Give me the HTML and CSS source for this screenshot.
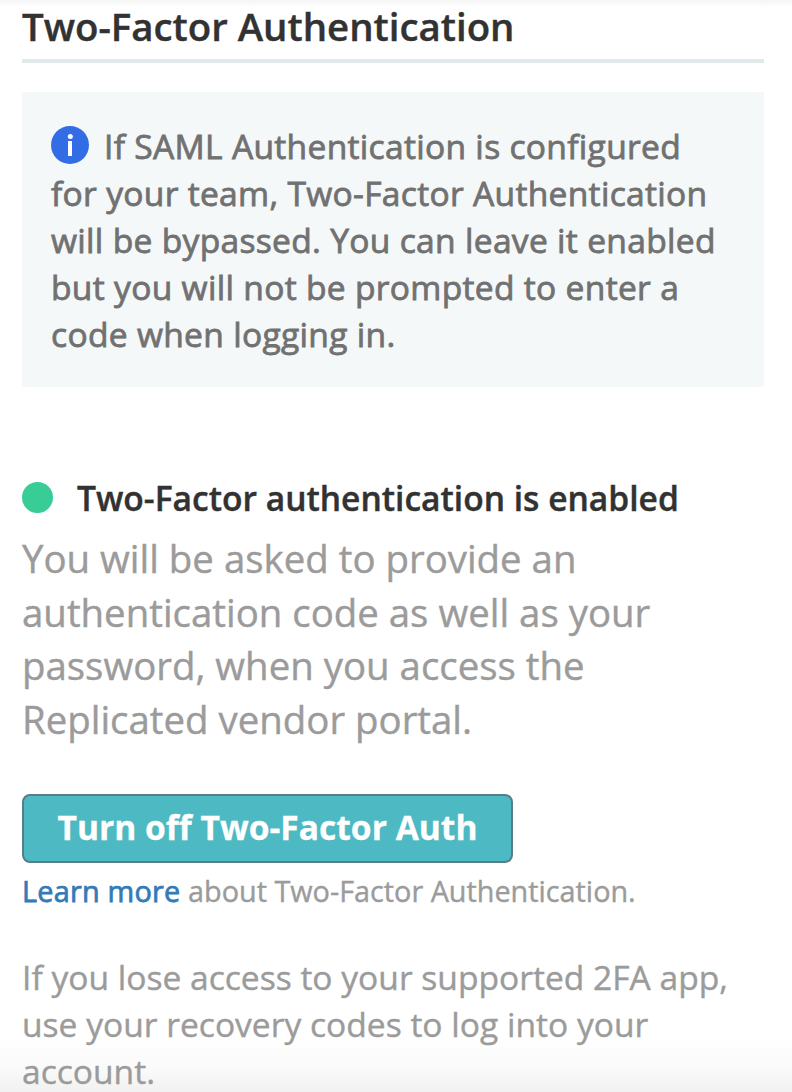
FILE: index.html
```
<!DOCTYPE html>
<html lang="en">
<head>
<meta charset="utf-8">
<title>Two-Factor Authentication</title>
<link rel="stylesheet" href="styles.css">
</head>
<body>
<main class="page">
<h1 class="title">Two-Factor Authentication</h1>
<section class="notice">
<div class="notice-line"><svg class="info" viewBox="0 0 38 38" aria-hidden="true"><circle cx="19" cy="19" r="19" fill="#326de6"/><circle cx="19.3" cy="10.4" r="2.5" fill="#fff"/><path d="M17 15h4v15h-4z" fill="#fff"/></svg><span>If SAML Authentication is configured</span></div>
<div>for your team, Two-Factor Authentication</div>
<div>will be bypassed. You can leave it enabled</div>
<div>but you will not be prompted to enter a</div>
<div>code when logging in.</div>
</section>
<div class="status"><span class="dot"></span><h2 class="status-title">Two-Factor authentication is enabled</h2></div>
<p class="description">You will be asked to provide an<br>authentication code as well as your<br>password, when you access the<br>Replicated vendor portal.</p>
<button class="button">Turn off Two-Factor Auth</button>
<p class="learn"><a class="link">Learn more</a> <span>about Two-Factor Authentication.</span></p>
<p class="recovery">If you lose access to your supported 2FA app,<br>use your recovery codes to log into your<br>account.</p>
</main>
</body>
</html>
```
FILE: styles.css
```
* { box-sizing: border-box; }
body { margin: 0; background: #fff; font-family: "Open Sans", sans-serif; }
.page { min-height: 1092px; padding: 0 28px 0 22px; background: linear-gradient(#f6f6f6, #fff 8px, #fff 1034px, #fafafa 1068px, #f1f1f1 1092px); }
.title { margin: 0; height: 63px; padding-top: 3px; border-bottom: 4px solid #e1eaea; color: #323232; font-size: 38.4px; line-height: 46px; font-weight: 600; -webkit-text-stroke: 0.4px #323232; white-space: nowrap; }
.notice { height: 295px; margin-top: 29px; padding: 31px 29px; background: #f4f8f9; color: #717171; font-size: 33.6px; line-height: 47px; letter-spacing: 0.3px; -webkit-text-stroke: 0.8px #717171; white-space: nowrap; }
.notice-line { display: flex; align-items: flex-start; gap: 15px; }
.info { width: 38px; height: 38px; margin-top: 3px; }
.status { display: flex; align-items: center; gap: 24px; height: 48px; margin-top: 86px; }
.dot { width: 31px; height: 31px; border-radius: 50%; background: #38cc97; }
.status-title { margin: 0; padding-top: 2px; color: #323232; font-size: 33.6px; font-weight: 600; -webkit-text-stroke: 0.4px #323232; white-space: nowrap; }
.description { margin: 11px 0 0; color: #9b9b9b; font-size: 38.4px; line-height: 53.6px; -webkit-text-stroke: 0.4px #9b9b9b; white-space: nowrap; }
.button { display: block; width: 491px; height: 69px; margin-top: 47.4px; padding: 0 0 2px; border: 2px solid #577e88; border-radius: 8px; background: #4db9c3; color: #fff; font: 700 33.6px "Open Sans", sans-serif; -webkit-text-stroke: 0.3px #fff; white-space: nowrap; }
.learn { margin: 7px 0 0; color: #9b9b9b; font-size: 28.8px; line-height: 42px; -webkit-text-stroke: 0.4px #9b9b9b; white-space: nowrap; }
.link { color: #337ab7; letter-spacing: 0.25px; -webkit-text-stroke: 0.75px #337ab7; }
.recovery { height: 139px; margin: 42px 0 0; color: #9b9b9b; font-size: 33.6px; line-height: 47px; -webkit-text-stroke: 0.4px #9b9b9b; white-space: nowrap; }
```
